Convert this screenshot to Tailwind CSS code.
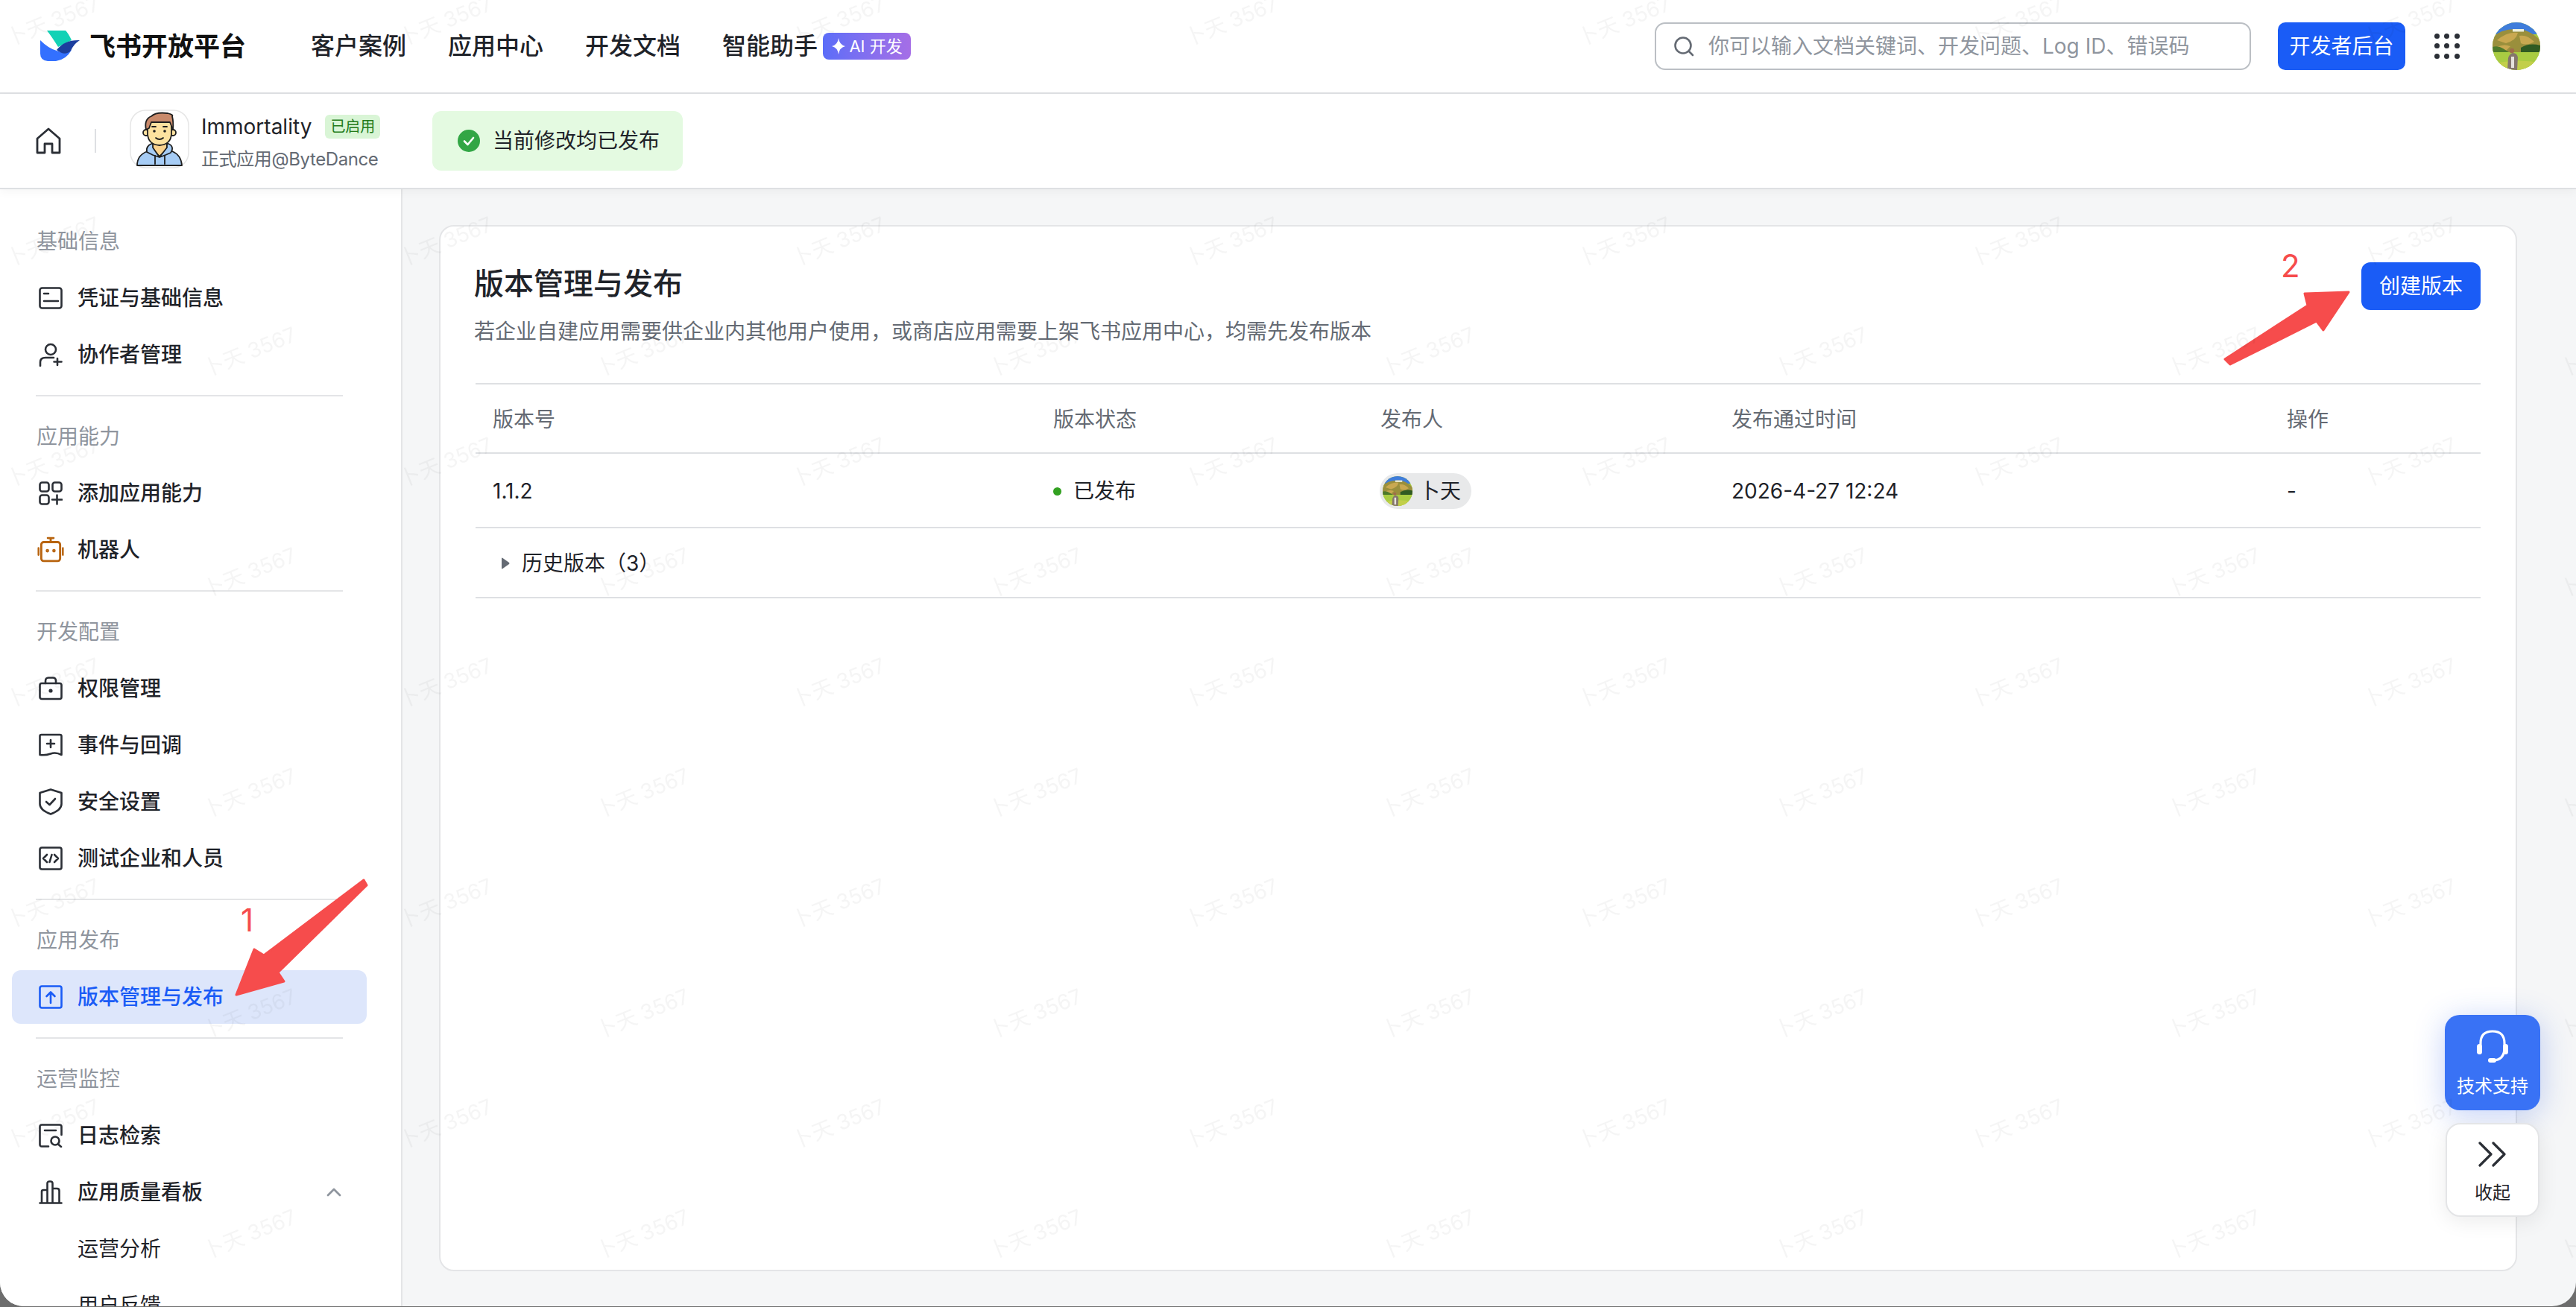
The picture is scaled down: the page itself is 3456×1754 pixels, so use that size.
<!doctype html>
<html lang="zh-CN">
<head>
<meta charset="utf-8">
<title>飞书开放平台</title>
<script src="https://cdn.jsdelivr.net/npm/@tailwindcss/browser@4"></script>
</head>
<body class="w-[3456px] h-[1754px] overflow-hidden bg-[#6d6d6d] font-['Inter','Noto_Sans_CJK_SC',sans-serif] text-[28px] text-[#1f2329]">
<svg class="hidden">
  <symbol id="scene" viewBox="0 0 64 64">
    <rect width="64" height="64" fill="#a5c93f"/>
    <rect width="64" height="16" fill="#3f7ddb"/>
    <path d="M0 40V20Q12 9 30 9Q48 8 64 24V40Z" fill="#9a8f3c"/>
    <path d="M6 24Q20 12 34 14Q32 24 18 28ZM36 18Q46 16 56 26Q46 32 38 28ZM4 34Q14 28 24 32L18 38Z" fill="#c9a850"/>
    <rect x="27" y="9" width="15" height="3.500" fill="#eef0dc"/>
    <path d="M38 40V34Q50 27 64 31V40Z" fill="#2f5a22"/>
    <path d="M0 40V33Q8 31 14 35L22 40Z" fill="#4d7a2a"/>
    <rect y="40" width="64" height="24" fill="#a9cc42"/>
    <path d="M0 64V56Q30 48 64 54V64Z" fill="#c2cf4a"/>
    <path d="M20 64L21 48Q22 43 27 41Q33 41 34 47L33 64Z" fill="#85766c"/>
    <rect x="25" y="46" width="4" height="15" fill="#e6e2dc"/>
    <circle cx="26" cy="38" r="3.200" fill="#a06c4a"/>
  </symbol>
</svg>

<div class="relative w-full h-[1753px] overflow-hidden rounded-b-[32px] bg-[#f5f6f7] flex flex-col">

  <!-- top bar -->
  <header class="h-[126px] shrink-0 bg-white border-b-2 border-[#dee0e3] flex items-center pl-[40px] pr-[48px]">
    <svg class="w-[80px] h-[60px] -mt-[4px]" viewBox="0 0 80 60">
      <path d="M23 11H48Q52 15 56 24L38 33Q30 20 23 11Z" fill="#12d2b6"/>
      <path d="M14 24Q25 35 36 38Q46 43 56 37Q49 50 35 52H24Q14 51 14 42Z" fill="#3370ff"/>
      <path d="M36 37Q47 23 67 24Q59 29 55 38Q47 46 36 37Z" fill="#1c3f9e"/>
    </svg>
    <div class="text-[35px] font-bold text-[#111] w-[216px]">飞书开放平台</div>
    <nav class="flex items-center ml-[81px] text-[32px] gap-[56px] font-medium">
      <a>客户案例</a>
      <a>应用中心</a>
      <a>开发文档</a>
      <div class="flex items-center">
        <a>智能助手</a>
        <span class="ml-[7px] w-[118px] h-[36px] rounded-[8px] bg-gradient-to-r from-[#5b6df8] to-[#a56ee6] text-white text-[22px] font-normal flex items-center justify-center gap-[4px]">
          <svg class="w-[20px] h-[24px]" viewBox="0 0 20 24"><path d="M10 1Q11 10 19 12Q11 14 10 23Q9 14 1 12Q9 10 10 1Z" fill="#fff"/></svg>
          AI 开发
        </span>
      </div>
    </nav>
    <div class="ml-auto w-[800px] h-[64px] border-2 border-[#bbbfc4] rounded-[14px] flex items-center pl-[22px]">
      <svg class="w-[30px] h-[30px] shrink-0" viewBox="0 0 30 30" fill="none" stroke="#646a73" stroke-width="2.6" stroke-linecap="round"><circle cx="14" cy="14" r="10.5"/><path d="M22 22l5 5"/></svg>
      <input class="ml-[18px] flex-1 outline-none bg-transparent placeholder:text-[#8f959e]" placeholder="你可以输入文档关键词、开发问题、Log ID、错误码">
    </div>
    <button class="ml-[36px] w-[171px] h-[64px] rounded-[10px] bg-[#1a5cf6] text-white">开发者后台</button>
    <div class="ml-[39px] w-[34px] h-[34px] grid grid-cols-3 gap-x-[6px] gap-y-[6px]">
      <i class="w-[7px] h-[7px] rounded-full bg-[#2b2f36]"></i><i class="w-[7px] h-[7px] rounded-full bg-[#2b2f36]"></i><i class="w-[7px] h-[7px] rounded-full bg-[#2b2f36]"></i>
      <i class="w-[7px] h-[7px] rounded-full bg-[#2b2f36]"></i><i class="w-[7px] h-[7px] rounded-full bg-[#2b2f36]"></i><i class="w-[7px] h-[7px] rounded-full bg-[#2b2f36]"></i>
      <i class="w-[7px] h-[7px] rounded-full bg-[#2b2f36]"></i><i class="w-[7px] h-[7px] rounded-full bg-[#2b2f36]"></i><i class="w-[7px] h-[7px] rounded-full bg-[#2b2f36]"></i>
    </div>
    <svg class="ml-[44px] w-[64px] h-[64px] rounded-full"><use href="#scene"/></svg>
  </header>

  <!-- app bar -->
  <div class="relative z-10 h-[128px] shrink-0 bg-white border-b-2 border-[#dee0e3] shadow-[0_4px_12px_rgba(0,0,0,0.04)] flex items-center pl-[48px]">
    <svg class="w-[34px] h-[36px]" viewBox="0 0 34 36" fill="none" stroke="#2b2f36" stroke-width="2.8" stroke-linejoin="round" stroke-linecap="round">
      <path d="M2 15L17 2L32 15V34H22V22H12V34H2Z"/>
    </svg>
    <i class="ml-[45px] w-[2px] h-[32px] bg-[#dee0e3]"></i>
    <svg class="ml-[38px] w-[95px] h-[95px] shrink-0" viewBox="0 0 95 95" stroke-linejoin="round" stroke-linecap="round">
      <rect x="8" y="6" width="78" height="77" rx="20" fill="#fff" stroke="#e6e6e6" stroke-width="1.5"/>
      <path d="M17 80Q17 66 31 61L64 61Q76 66 77 80Z" fill="#a6ccf5" stroke="#1f1f1f" stroke-width="1.8"/>
      <path d="M38 48L38 58L47 68L57 58L57 48Z" fill="#fbd38d" stroke="#1f1f1f" stroke-width="1.8"/>
      <path d="M38 50Q28 54 30 62L38 66L47 69L38 56ZM57 50Q68 54 62 63L55 66L47 69L57 56Z" fill="#a6ccf5" stroke="#1f1f1f" stroke-width="1.8"/>
      <path d="M41 67V78M54 67V78" stroke="#1f1f1f" stroke-width="1.8"/>
      <circle cx="29" cy="36" r="4" fill="#fde29f" stroke="#1f1f1f" stroke-width="1.8"/>
      <circle cx="65" cy="36" r="4" fill="#fde29f" stroke="#1f1f1f" stroke-width="1.8"/>
      <path d="M31 22H63V38Q62 52 47 53Q32 52 31 38Z" fill="#fde29f" stroke="#1f1f1f" stroke-width="1.8"/>
      <path d="M29 32Q26 18 36 14Q42 8 58 10Q66 12 64 14Q66 22 65 32L61 22H36L33 30Z" fill="#c98a6b" stroke="#1f1f1f" stroke-width="1.8"/>
      <circle cx="40" cy="34" r="1.8" fill="#1f1f1f"/><circle cx="54" cy="34" r="1.8" fill="#1f1f1f"/>
      <path d="M37 28h5M52 28h5M42 43Q47 47 52 43" fill="none" stroke="#1f1f1f" stroke-width="1.8"/>
    </svg>
    <div class="ml-[8px] w-[243px] pt-[4px]">
      <div class="flex items-center h-[40px]">
        <span>Immortality</span>
        <span class="ml-[18px] w-[74px] h-[32px] rounded-[6px] bg-[#d9f5d6] text-[#237b19] text-[20px] flex items-center justify-center">已启用</span>
      </div>
      <div class="mt-[6px] text-[24px] leading-[36px] text-[#646a73] whitespace-nowrap tracking-[-0.4px]">正式应用@ByteDance</div>
    </div>
    <div class="ml-[67px] w-[336px] h-[80px] rounded-[12px] bg-[#e4fae1] flex items-center pl-[34px] gap-[17px]">
      <svg class="w-[30px] h-[30px]" viewBox="0 0 30 30"><circle cx="15" cy="15" r="15" fill="#32a645"/><path d="M9 15.5l4.5 4.5L21 11" fill="none" stroke="#fff" stroke-width="2.6" stroke-linecap="round" stroke-linejoin="round"/></svg>
      <span>当前修改均已发布</span>
    </div>
  </div>

  <div class="flex-1 flex min-h-0">
    <!-- side nav -->
    <aside class="w-[540px] shrink-0 bg-white border-r-2 border-[#e4e5e7] overflow-hidden pt-[32px] pl-[16px] pr-[46px]">
      <div class="h-[76px] pl-[33px] flex items-center text-[#8f959e]">基础信息</div>
      <a class="h-[76px] pl-[36px] flex items-center gap-[20px] font-medium">
        <svg class="w-[32px] h-[32px]" viewBox="0 0 32 32" fill="none" stroke="#2b2f36" stroke-width="2.6" stroke-linecap="round"><rect x="1.5" y="2.5" width="29" height="27" rx="3"/><path d="M7 10h6M7 20h19"/></svg>
        <span>凭证与基础信息</span>
      </a>
      <a class="h-[76px] pl-[36px] flex items-center gap-[20px] font-medium">
        <svg class="w-[32px] h-[32px]" viewBox="0 0 32 32" fill="none" stroke="#2b2f36" stroke-width="2.6" stroke-linecap="round"><circle cx="16" cy="9" r="7"/><path d="M2 31v-5q0-6 7-6h11M25 21v9M20.500 25.500h10"/></svg>
        <span>协作者管理</span>
      </a>
      <div class="h-[2px] mx-[32px] my-[16px] bg-[#e4e5e7]"></div>
      <div class="h-[76px] pl-[33px] flex items-center text-[#8f959e]">应用能力</div>
      <a class="h-[76px] pl-[36px] flex items-center gap-[20px] font-medium">
        <svg class="w-[32px] h-[32px]" viewBox="0 0 32 32" fill="none" stroke="#2b2f36" stroke-width="2.6" stroke-linecap="round"><rect x="1.500" y="1.500" width="12" height="12" rx="3"/><rect x="18.500" y="1.500" width="12" height="12" rx="3"/><rect x="1.500" y="18.500" width="12" height="12" rx="3"/><path d="M24.500 18.500v12M18 24.500h13"/></svg>
        <span>添加应用能力</span>
      </a>
      <a class="h-[76px] pl-[36px] flex items-center gap-[20px] font-medium">
        <svg class="w-[32px] h-[32px] scale-110" viewBox="0 0 32 32" fill="none" stroke="#b8640f" stroke-width="2.6" stroke-linecap="round"><rect x="4.500" y="6.500" width="23" height="23" rx="3"/><path d="M16 1.500v5M12.500 1.500h7M1 14v8M31 14v8"/><circle cx="12" cy="17" r=".8" fill="#b8640f"/><circle cx="20" cy="17" r=".8" fill="#b8640f"/></svg>
        <span>机器人</span>
      </a>
      <div class="h-[2px] mx-[32px] my-[16px] bg-[#e4e5e7]"></div>
      <div class="h-[76px] pl-[33px] flex items-center text-[#8f959e]">开发配置</div>
      <a class="h-[76px] pl-[36px] flex items-center gap-[20px] font-medium">
        <svg class="w-[32px] h-[32px]" viewBox="0 0 32 32" fill="none" stroke="#2b2f36" stroke-width="2.6" stroke-linecap="round" stroke-linejoin="round"><rect x="1.500" y="9" width="29" height="21" rx="2.500"/><path d="M9 9V6q0-4.500 4-4.500h6q4 0 4 4.500v3"/><circle cx="16" cy="19" r="1.300" fill="#2b2f36"/></svg>
        <span>权限管理</span>
      </a>
      <a class="h-[76px] pl-[36px] flex items-center gap-[20px] font-medium">
        <svg class="w-[32px] h-[32px]" viewBox="0 0 32 32" fill="none" stroke="#2b2f36" stroke-width="2.6" stroke-linecap="round" stroke-linejoin="round"><path d="M3.500 2H28.500Q30.500 2 30.500 4V29Q23 25 16 27.500Q9 30 1.500 29V4Q1.500 2 3.500 2Z"/><path d="M16 9v10M11 14h10"/></svg>
        <span>事件与回调</span>
      </a>
      <a class="h-[76px] pl-[36px] flex items-center gap-[20px] font-medium">
        <svg class="w-[32px] h-[36px]" viewBox="0 0 32 36" fill="none" stroke="#2b2f36" stroke-width="2.6" stroke-linecap="round" stroke-linejoin="round"><path d="M16 1.500L30.500 6V21Q30.500 29 16 34.500Q1.500 29 1.500 21V6Z"/><path d="M10 18l4.500 4L22 14"/></svg>
        <span>安全设置</span>
      </a>
      <a class="h-[76px] pl-[36px] flex items-center gap-[20px] font-medium">
        <svg class="w-[32px] h-[32px]" viewBox="0 0 32 32" fill="none" stroke="#2b2f36" stroke-width="2.6" stroke-linecap="round" stroke-linejoin="round"><rect x="1.500" y="1.500" width="29" height="29" rx="2.500"/><path d="M11 11l-5 5 5 5M21 11l5 5-5 5M17.500 11l-3 10"/></svg>
        <span>测试企业和人员</span>
      </a>
      <div class="h-[2px] mx-[32px] my-[16px] bg-[#e4e5e7]"></div>
      <div class="h-[76px] pl-[33px] flex items-center text-[#8f959e]">应用发布</div>
      <div class="h-[76px] py-[2px]">
        <a class="h-[72px] pl-[36px] rounded-[12px] bg-[#dde6fb] text-[#1a5cf6] flex items-center gap-[20px] font-medium">
          <svg class="w-[32px] h-[32px]" viewBox="0 0 32 32" fill="none" stroke="#1a5cf6" stroke-width="2.6" stroke-linecap="round" stroke-linejoin="round"><rect x="1.500" y="1.500" width="29" height="29" rx="2.500"/><path d="M16 24V10M10.500 15L16 9.500l5.500 5.500"/></svg>
          <span>版本管理与发布</span>
        </a>
      </div>
      <div class="h-[2px] mx-[32px] my-[16px] bg-[#e4e5e7]"></div>
      <div class="h-[76px] pl-[33px] flex items-center text-[#8f959e]">运营监控</div>
      <a class="h-[76px] pl-[36px] flex items-center gap-[20px] font-medium">
        <svg class="w-[32px] h-[32px]" viewBox="0 0 32 32" fill="none" stroke="#2b2f36" stroke-width="2.6" stroke-linecap="round" stroke-linejoin="round"><path d="M13 30.500H4Q1.500 30.500 1.500 28V4Q1.500 1.500 4 1.500H28Q30.500 1.500 30.500 4V15M8 9h15"/><circle cx="22" cy="23" r="5.500"/><path d="M26 27.500l4 3.500"/></svg>
        <span>日志检索</span>
      </a>
      <a class="h-[76px] pl-[36px] pr-[34px] flex items-center gap-[20px] font-medium">
        <svg class="w-[32px] h-[32px]" viewBox="0 0 32 32" fill="none" stroke="#2b2f36" stroke-width="2.6" stroke-linecap="round" stroke-linejoin="round"><path d="M1.500 30.500h29M4 30V15q0-2 2.500-2h5V30M11.500 30V4q0-2.500 3-2.500h1q3 0 3 2.500v26M18.500 11h6q3 0 3 3v16"/></svg>
        <span>应用质量看板</span>
        <svg class="ml-auto w-[20px] h-[12px]" viewBox="0 0 20 12" fill="none" stroke="#8f959e" stroke-width="2.8" stroke-linecap="round" stroke-linejoin="round"><path d="M2 10l8-8 8 8"/></svg>
      </a>
      <a class="h-[76px] pl-[88px] flex items-center">运营分析</a>
      <a class="h-[76px] pl-[88px] flex items-center">用户反馈</a>
    </aside>

    <!-- content -->
    <main class="flex-1 min-w-0 pt-[48px] pl-[49px] pr-[79px] pb-[47px]">
      <section class="h-full bg-white border-2 border-[#e4e5e7] rounded-[20px] px-[47px]">
        <div class="flex justify-between items-start h-[212px] border-b-2 border-[#dee0e3]">
          <div class="-ml-[2px]">
            <h1 class="mt-[49px] text-[40px] leading-[56px] font-medium">版本管理与发布</h1>
            <p class="mt-[16px] text-[#646a73] leading-[40px]">若企业自建应用需要供企业内其他用户使用，或商店应用需要上架飞书应用中心，均需先发布版本</p>
          </div>
          <button class="mt-[48px] w-[160px] h-[64px] rounded-[12px] bg-[#1a5cf6] text-white">创建版本</button>
        </div>
        <div class="grid grid-cols-[752px_439px_471px_745px_1fr] pl-[23px] pt-[2px] h-[93px] items-center border-b-2 border-[#dee0e3] text-[#646a73]">
          <div>版本号</div><div>版本状态</div><div>发布人</div><div>发布通过时间</div><div>操作</div>
        </div>
        <div class="grid grid-cols-[752px_439px_471px_745px_1fr] pl-[23px] pt-[2px] h-[100px] items-center border-b-2 border-[#dee0e3]">
          <div>1.1.2</div>
          <div class="flex items-center gap-[16px]"><i class="w-[11px] h-[11px] rounded-full bg-[#32a121]"></i>已发布</div>
          <div class="flex">
            <span class="-ml-[1px] flex items-center w-[123px] h-[48px] rounded-full bg-[#e8e9ea] pl-[4px] gap-[9px]">
              <svg class="w-[40px] h-[40px] rounded-full"><use href="#scene"/></svg>卜天
            </span>
          </div>
          <div>2026-4-27 12:24</div>
          <div>-</div>
        </div>
        <div class="h-[94px] pl-[34px] pt-[2px] flex items-center border-b-2 border-[#dee0e3]">
          <svg class="w-[12px] h-[18px]" viewBox="0 0 12 18"><path d="M1 2.500Q1 1 2.500 2L11 8Q12 9 11 10L2.500 16Q1 17 1 15.500Z" fill="#646a73"/></svg>
          <span class="ml-[16px]">历史版本（3）</span>
        </div>
      </section>
    </main>
  </div>

  <!-- floating help buttons -->
  <div class="absolute left-[3280px] top-[1362px] w-[128px] flex flex-col items-center gap-[17px] text-[24px]">
    <button class="w-[128px] h-[128px] rounded-[20px] bg-[#3972f5] text-white shadow-[0_6px_40px_rgba(40,90,230,0.28)] flex flex-col items-center">
      <svg class="mt-[20px] w-[44px] h-[44px]" viewBox="0 0 44 44" fill="none" stroke="#fff" stroke-width="3.200" stroke-linecap="round"><path d="M6 20V18Q6 2 22 2Q38 2 38 18V24Q38 41 22 41"/><rect x="1" y="19" width="7" height="14" rx="3.500" fill="#fff" stroke="none"/><rect x="36" y="19" width="7" height="14" rx="3.500" fill="#fff" stroke="none"/><rect x="16" y="38" width="11" height="6" rx="3" fill="#fff" stroke="none"/></svg>
      <span class="mt-[14px]">技术支持</span>
    </button>
    <button class="w-[126px] h-[126px] rounded-[20px] bg-white border-2 border-[#e4e5e7] shadow-[0_6px_28px_rgba(0,0,0,0.08)] flex flex-col items-center">
      <svg class="mt-[23px] w-[38px] h-[34px]" viewBox="0 0 38 34" fill="none" stroke="#2b2f36" stroke-width="3.200" stroke-linecap="round" stroke-linejoin="round"><path d="M2 2L17 17L2 32M20 2L35 17L20 32"/></svg>
      <span class="mt-[17px] leading-[36px]">收起</span>
    </button>
  </div>

  <!-- red annotations -->
  <span class="absolute left-[323px] top-[1212px] text-[42px] leading-[46px] text-[#f64c4c]">1</span>
  <span class="absolute left-[3060px] top-[334px] text-[42px] leading-[46px] text-[#f64c4c]">2</span>
  <svg class="absolute inset-0 w-[3456px] h-[1753px] pointer-events-none" viewBox="0 0 3456 1753" fill="#f64c4c" stroke="#f64c4c" stroke-width="3" stroke-linejoin="round">
    <polygon points="488,1181 492,1188 373,1305 381,1317 317,1335 341,1274 354,1282"/>
    <polygon points="2985,482 3096,410 3092,394 3151,392 3117,443 3108,431 2992,489"/>
  </svg>

  <!-- watermark -->
  <svg class="absolute inset-0 w-[3456px] h-[1753px] pointer-events-none">
    <defs>
      <pattern id="wm" width="527" height="296" patternUnits="userSpaceOnUse" patternTransform="translate(0 -30)">
        <text x="72" y="60" transform="rotate(-22 72 60)" text-anchor="middle" dominant-baseline="middle" font-family="Inter, Noto Sans CJK SC, sans-serif" font-size="28" fill="#000" fill-opacity="0.04">卜天 3567</text>
        <text x="336" y="208" transform="rotate(-22 336 208)" text-anchor="middle" dominant-baseline="middle" font-family="Inter, Noto Sans CJK SC, sans-serif" font-size="28" fill="#000" fill-opacity="0.04">卜天 3567</text>
      </pattern>
    </defs>
    <rect width="3456" height="1753" fill="url(#wm)"/>
  </svg>
</div>
</body>
</html>
